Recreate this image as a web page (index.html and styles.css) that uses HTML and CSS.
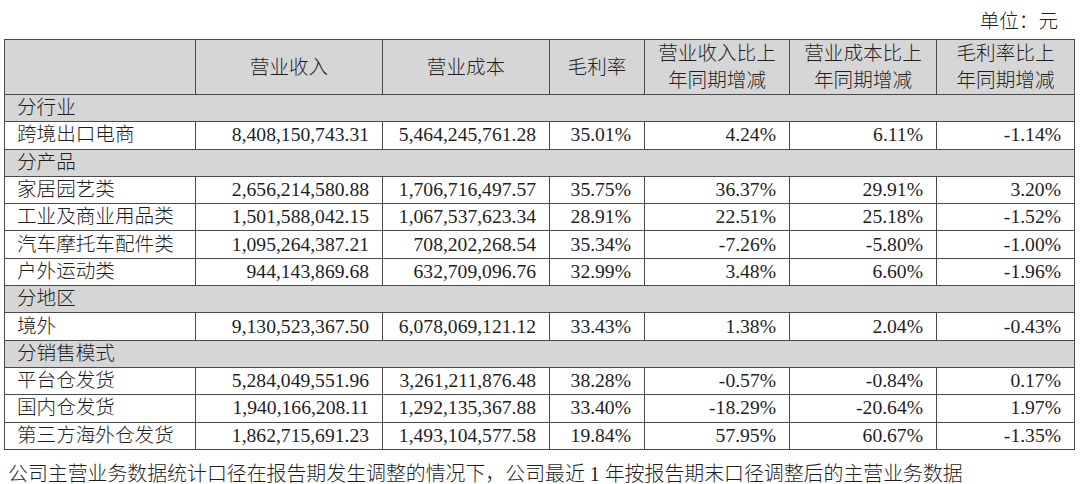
FILE: index.html
```html
<!DOCTYPE html>
<html lang="zh-CN">
<head>
<meta charset="utf-8">
<title>主营业务数据</title>
<link rel="stylesheet" href="styles.css">
</head>
<body>
<div class="page">
  <div class="unit">单位：元</div>
  <table class="report">
    <colgroup>
      <col class="c1"><col class="c2"><col class="c3"><col class="c4"><col class="c5"><col class="c6"><col class="c7">
    </colgroup>
    <thead>
      <tr class="head">
        <th></th>
        <th>营业收入</th>
        <th>营业成本</th>
        <th>毛利率</th>
        <th>营业收入比上<br>年同期增减</th>
        <th>营业成本比上<br>年同期增减</th>
        <th>毛利率比上<br>年同期增减</th>
      </tr>
    </thead>
    <tbody>
      <tr class="section"><td colspan="7">分行业</td></tr>
      <tr><td>跨境出口电商</td><td>8,408,150,743.31</td><td>5,464,245,761.28</td><td>35.01%</td><td>4.24%</td><td>6.11%</td><td>-1.14%</td></tr>
      <tr class="section"><td colspan="7">分产品</td></tr>
      <tr><td>家居园艺类</td><td>2,656,214,580.88</td><td>1,706,716,497.57</td><td>35.75%</td><td>36.37%</td><td>29.91%</td><td>3.20%</td></tr>
      <tr><td>工业及商业用品类</td><td>1,501,588,042.15</td><td>1,067,537,623.34</td><td>28.91%</td><td>22.51%</td><td>25.18%</td><td>-1.52%</td></tr>
      <tr><td>汽车摩托车配件类</td><td>1,095,264,387.21</td><td>708,202,268.54</td><td>35.34%</td><td>-7.26%</td><td>-5.80%</td><td>-1.00%</td></tr>
      <tr><td>户外运动类</td><td>944,143,869.68</td><td>632,709,096.76</td><td>32.99%</td><td>3.48%</td><td>6.60%</td><td>-1.96%</td></tr>
      <tr class="section"><td colspan="7">分地区</td></tr>
      <tr><td>境外</td><td>9,130,523,367.50</td><td>6,078,069,121.12</td><td>33.43%</td><td>1.38%</td><td>2.04%</td><td>-0.43%</td></tr>
      <tr class="section"><td colspan="7">分销售模式</td></tr>
      <tr><td>平台仓发货</td><td>5,284,049,551.96</td><td>3,261,211,876.48</td><td>38.28%</td><td>-0.57%</td><td>-0.84%</td><td>0.17%</td></tr>
      <tr><td>国内仓发货</td><td>1,940,166,208.11</td><td>1,292,135,367.88</td><td>33.40%</td><td>-18.29%</td><td>-20.64%</td><td>1.97%</td></tr>
      <tr><td>第三方海外仓发货</td><td>1,862,715,691.23</td><td>1,493,104,577.58</td><td>19.84%</td><td>57.95%</td><td>60.67%</td><td>-1.35%</td></tr>
    </tbody>
  </table>
  <p class="note">公司主营业务数据统计口径在报告期发生调整的情况下，公司最近 1 年按报告期末口径调整后的主营业务数据</p>
</div>
</body>
</html>
```

FILE: styles.css
```css
html, body {
  margin: 0;
  padding: 0;
  background: #ffffff;
}

body {
  font-family: "Liberation Serif", "Noto Sans CJK SC", serif;
  color: #1e1e1e;
  font-size: 19.6px;
  width: 1080px;
  height: 484px;
  overflow: hidden;
}

.page {
  padding-left: 4px;
}

.unit {
  height: 39px;
  box-sizing: border-box;
  padding-top: 10px;
  padding-right: 22px;
  line-height: 24px;
  text-align: right;
  font-weight: 300;
}

.report {
  border-collapse: collapse;
  table-layout: fixed;
  width: 1070px;
}

.c1 { width: 191px; }
.c2 { width: 187px; }
.c3 { width: 167px; }
.c4 { width: 95px; }
.c5 { width: 145px; }
.c6 { width: 147px; }
.c7 { width: 138px; }

.report th,
.report td {
  border: 1.5px solid #4a4a4a;
  padding: 0 13px 0 0;
  line-height: 24px;
  white-space: nowrap;
  overflow: hidden;
}

.report th {
  background: #d6d6d6;
  font-weight: 300;
  text-align: center;
  padding: 0;
  height: 52px;
  line-height: 27px;
}

.report td {
  height: 26.3px;
  text-align: right;
}

.report td:first-child {
  text-align: left;
  padding: 0 0 0 12px;
  font-weight: 300;
}

.report .section td {
  background: #d6d6d6;
}

.note {
  margin: 12px 0 0 4px;
  line-height: 24px;
  font-size: 19.9px;
  font-weight: 300;
  white-space: nowrap;
}
```
